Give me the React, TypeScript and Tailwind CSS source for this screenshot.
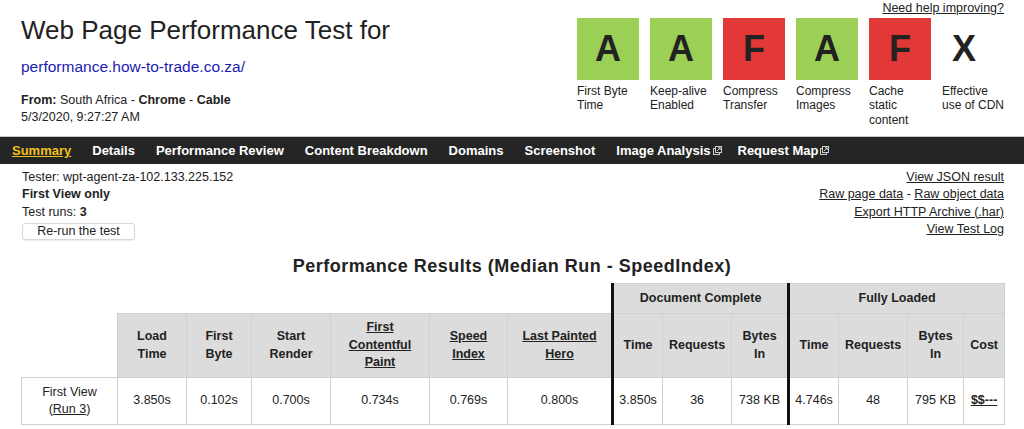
import React from "react";

const FONT = { fontFamily: '"Liberation Sans", Arial, Helvetica, sans-serif' };

const ExtIcon = () => (
  <svg width="9" height="9" viewBox="0 0 9 9" className="inline-block ml-[2px] -mr-[5px] align-[0px]">
    <rect x="0.5" y="2.5" width="6" height="6" fill="none" stroke="#cfcfcf" strokeWidth="1" />
    <rect x="2.5" y="0.5" width="6" height="6" fill="#252525" stroke="#cfcfcf" strokeWidth="1" />
    <path d="M4 5 L7.2 1.8 M5 1.8 H7.2 V4" fill="none" stroke="#cfcfcf" strokeWidth="1" />
  </svg>
);

type Grade = { g: string; c: string; l: string[]; x?: boolean };

const grades: Grade[] = [
  { g: "A", c: "bg-[#9bcf55]", l: ["First Byte", "Time"] },
  { g: "A", c: "bg-[#9bcf55]", l: ["Keep-alive", "Enabled"] },
  { g: "F", c: "bg-[#e23838]", l: ["Compress", "Transfer"] },
  { g: "A", c: "bg-[#9bcf55]", l: ["Compress", "Images"] },
  { g: "F", c: "bg-[#e23838]", l: ["Cache", "static", "content"] },
  { g: "X", c: "bg-white", l: ["Effective", "use of CDN"], x: true },
];

const th = "border border-[#d0d0d0] bg-[#dcdcdc] font-bold text-center align-middle px-[2px]";
const td = "border border-[#d0d0d0] bg-white text-center align-middle px-[2px]";
const thick = "border-l-[3px] border-l-[#111]";

export default function App() {
  return (
    <div className="w-[1024px] h-[429px] overflow-hidden bg-white text-[#222]" style={FONT}>
      {/* Header */}
      <div className="flex justify-between pl-[21px] pr-[20px] h-[136px]">
        <div>
          <h1 className="mt-[15px] text-[26px] leading-[30px] font-normal text-[#222]">
            Web Page Performance Test for
          </h1>
          <div className="mt-[13px] text-[15.5px] leading-[18px] text-[#1c1cb0]">
            performance.how-to-trade.co.za/
          </div>
          <div className="mt-[15.5px] text-[12.5px] leading-[17px]">
            <div>
              <b>From:</b> South Africa - <b>Chrome</b> - <b>Cable</b>
            </div>
            <div>5/3/2020, 9:27:27 AM</div>
          </div>
        </div>
        <div className="flex flex-col items-end">
          <a className="text-[12.5px] leading-[17px] underline text-[#222]">Need help improving?</a>
          <div className="mt-[1px] flex gap-[11px]">
            {grades.map((g, i) => (
              <div key={i} className="w-[62px]">
                <div
                  className={`h-[62px] w-[62px] flex items-center ${
                    g.x ? "justify-start pl-[10px]" : "justify-center"
                  } ${g.c} text-[36px] font-bold text-[#222]`}
                >
                  {g.g}
                </div>
                <div className="mt-[3.5px] text-[12px] leading-[14.7px] whitespace-nowrap">
                  {g.l.map((t, j) => (
                    <div key={j}>{t}</div>
                  ))}
                </div>
              </div>
            ))}
          </div>
        </div>
      </div>

      {/* Nav */}
      <nav className="border-t border-[#c8c8c8] bg-[#252525] h-[28px] flex items-center pl-[12px] gap-[21px] text-[13px] font-bold text-white whitespace-nowrap">
        <a className="text-[#f0c020] underline">Summary</a>
        <a>Details</a>
        <a>Performance Review</a>
        <a>Content Breakdown</a>
        <a>Domains</a>
        <a>Screenshot</a>
        <a>
          Image Analysis
          <ExtIcon />
        </a>
        <a>
          Request Map
          <ExtIcon />
        </a>
      </nav>

      {/* Test info */}
      <div className="flex justify-between pl-[22px] pr-[20px] mt-[4.5px] text-[12.5px] leading-[17.5px]">
        <div>
          <div>Tester: wpt-agent-za-102.133.225.152</div>
          <div className="font-bold">First View only</div>
          <div>
            Test runs: <b>3</b>
          </div>
          <button className="mt-[1.5px] w-[113px] h-[17px] border border-[#d8d8d8] rounded-[3px] bg-white text-[12.5px] leading-[15px] text-[#222] shadow-[0_1px_1px_rgba(0,0,0,0.08)]">
            Re-run the test
          </button>
        </div>
        <div className="text-right">
          <div>
            <a className="underline">View JSON result</a>
          </div>
          <div>
            <a className="underline">Raw page data</a> - <a className="underline">Raw object data</a>
          </div>
          <div>
            <a className="underline">Export HTTP Archive (.har)</a>
          </div>
          <div>
            <a className="underline">View Test Log</a>
          </div>
        </div>
      </div>

      {/* Heading */}
      <h2 className="mt-[15px] text-center text-[18px] leading-[22px] font-bold tracking-[0.5px] text-[#222]">
        Performance Results (Median Run - SpeedIndex)
      </h2>

      {/* Table */}
      <table className="ml-[21px] mt-[6px] w-[983px] table-fixed text-[12.5px] leading-[17.5px]">
        <colgroup>
          <col className="w-[96px]" />
          <col className="w-[69px]" />
          <col className="w-[65px]" />
          <col className="w-[79px]" />
          <col className="w-[99px]" />
          <col className="w-[78px]" />
          <col className="w-[105px]" />
          <col className="w-[50px]" />
          <col className="w-[69px]" />
          <col className="w-[57px]" />
          <col className="w-[50px]" />
          <col className="w-[69px]" />
          <col className="w-[56px]" />
          <col className="w-[41px]" />
        </colgroup>
        <thead>
          <tr className="h-[30px]">
            <th colSpan={7} className="bg-white"></th>
            <th colSpan={3} className={`${th} ${thick}`}>Document Complete</th>
            <th colSpan={4} className={`${th} ${thick}`}>Fully Loaded</th>
          </tr>
          <tr className="h-[64px]">
            <th className="bg-white"></th>
            <th className={th}>Load<br />Time</th>
            <th className={th}>First<br />Byte</th>
            <th className={th}>Start<br />Render</th>
            <th className={th}>
              <a className="underline">First<br />Contentful<br />Paint</a>
            </th>
            <th className={th}>
              <a className="underline">Speed<br />Index</a>
            </th>
            <th className={th}>
              <a className="underline">Last Painted<br />Hero</a>
            </th>
            <th className={`${th} ${thick}`}>Time</th>
            <th className={th}>Requests</th>
            <th className={th}>Bytes<br />In</th>
            <th className={`${th} ${thick}`}>Time</th>
            <th className={th}>Requests</th>
            <th className={th}>Bytes<br />In</th>
            <th className={th}>Cost</th>
          </tr>
        </thead>
        <tbody>
          <tr className="h-[47px]">
            <td className={td}>
              First View
              <br />(<a className="underline">Run 3</a>)
            </td>
            <td className={td}>3.850s</td>
            <td className={td}>0.102s</td>
            <td className={td}>0.700s</td>
            <td className={td}>0.734s</td>
            <td className={td}>0.769s</td>
            <td className={td}>0.800s</td>
            <td className={`${td} ${thick}`}>3.850s</td>
            <td className={td}>36</td>
            <td className={td}>738 KB</td>
            <td className={`${td} ${thick}`}>4.746s</td>
            <td className={td}>48</td>
            <td className={td}>795 KB</td>
            <td className={td}>
              <a className="underline font-bold">$$---</a>
            </td>
          </tr>
        </tbody>
      </table>
      <div className="mt-[3px] ml-[21px] w-[983px] text-center text-[12.5px] leading-[17px]">
        Plot Full Results
      </div>
    </div>
  );
}
